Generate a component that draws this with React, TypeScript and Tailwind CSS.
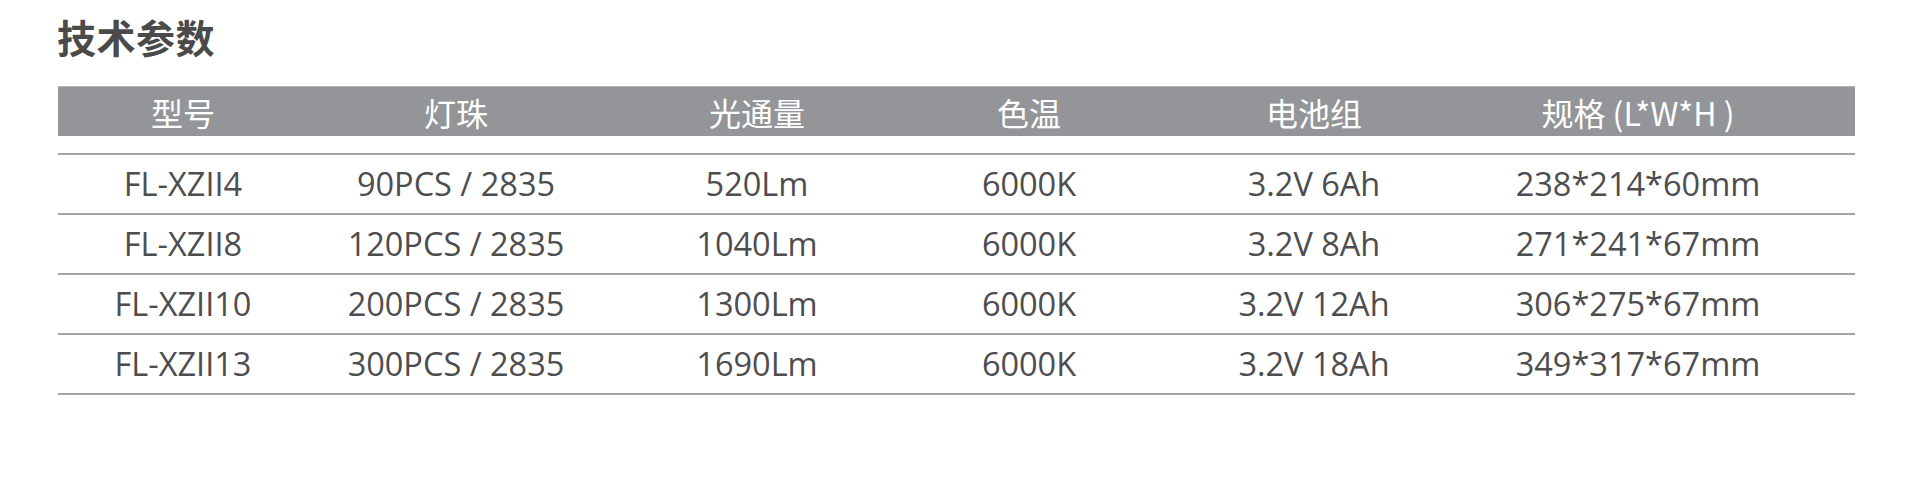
import React from "react";

const cols = ["w-[250px]", "w-[296px]", "w-[306px]", "w-[238px]", "w-[332px]", "w-[316px]"];

const headers = ["型号", "灯珠", "光通量", "色温", "电池组", "规格 (L*W*H )"];

const rows = [
  ["FL-XZII4", "90PCS / 2835", "520Lm", "6000K", "3.2V 6Ah", "238*214*60mm"],
  ["FL-XZII8", "120PCS / 2835", "1040Lm", "6000K", "3.2V 8Ah", "271*241*67mm"],
  ["FL-XZII10", "200PCS / 2835", "1300Lm", "6000K", "3.2V 12Ah", "306*275*67mm"],
  ["FL-XZII13", "300PCS / 2835", "1690Lm", "6000K", "3.2V 18Ah", "349*317*67mm"],
];

export default function App() {
  return (
    <div className="w-[1920px] h-[496px] bg-white overflow-hidden">
      <div className="pl-[57px] pt-[17px]">
        <h1
          className="text-[39px] leading-none font-bold text-[#4a4a4a] tracking-[0.5px]"
          style={{ fontFamily: '"Noto Sans CJK SC", "Noto Sans", sans-serif' }}
        >
          技术参数
        </h1>
      </div>
      <div className="ml-[58px] w-[1797px] mt-[30px]">
        <div
          className="flex h-[50px] items-center bg-[#939598] border-t border-[#b4b5b8] text-white text-[32px] leading-none font-normal"
          style={{ fontFamily: '"Noto Sans CJK SC", "Noto Sans", sans-serif' }}
        >
          {headers.map((h, i) => (
            <div key={i} className={`${cols[i]} text-center`}>
              {h}
            </div>
          ))}
        </div>
        <div className="mt-[17px] border-t-2 border-[#a2a2a4]">
          {rows.map((r, ri) => (
            <div
              key={ri}
              className="flex h-[60px] items-center border-b-2 border-[#a2a2a4] text-[32.5px] leading-none text-[#4d4d4f]"
              style={{ fontFamily: '"Open Sans", "Noto Sans", sans-serif' }}
            >
              {r.map((c, ci) => (
                <div key={ci} className={`${cols[ci]} text-center`}>
                  {c}
                </div>
              ))}
            </div>
          ))}
        </div>
      </div>
    </div>
  );
}
